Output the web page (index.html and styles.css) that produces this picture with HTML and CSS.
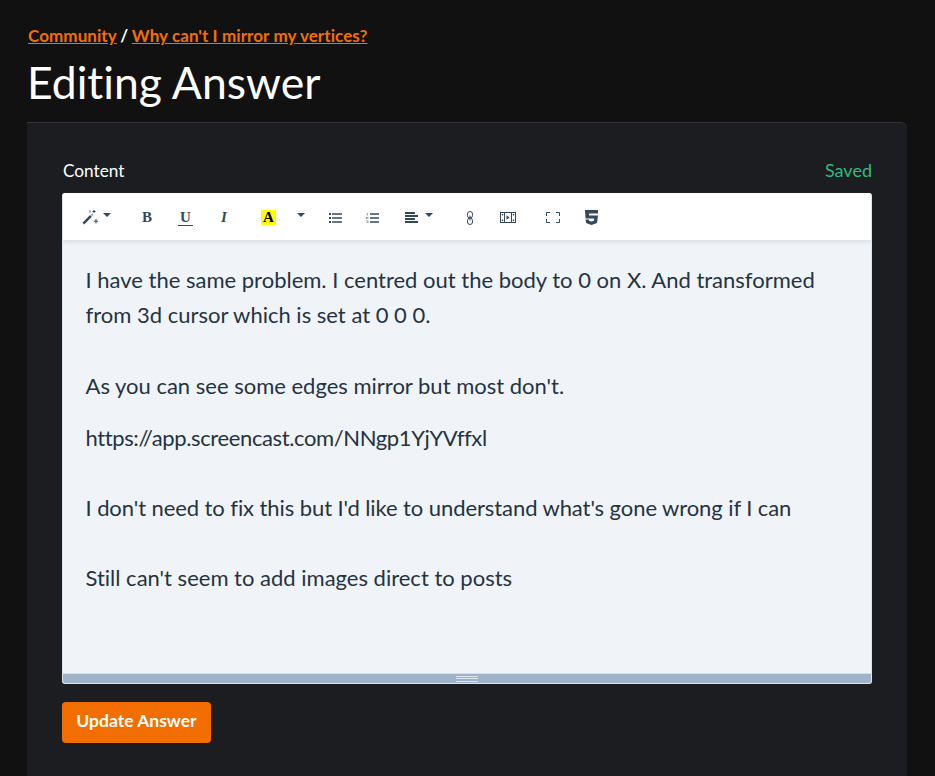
FILE: index.html
```html
<!DOCTYPE html>
<html lang="en">
<head>
<meta charset="utf-8">
<title>Editing Answer</title>
<link rel="stylesheet" href="styles.css">
</head>
<body>
<header class="page-head">
  <nav class="crumbs"><a href="#">Community</a><span class="sep">/</span><a href="#">Why can't I mirror my vertices?</a></nav>
  <h1>Editing Answer</h1>
</header>
<main class="panel">
  <div class="label-row"><span class="label">Content</span><span class="saved">Saved</span></div>
  <div class="editor">
    <div class="toolbar">
      <span class="tool tool-wand">
        <svg width="16" height="15" viewBox="0 0 16 15"><path d="M.5 12.800 8 5l1.800 1.700-7.600 7.800z" fill="#34495e"/><path d="M8.900 4.800 10.300 3.400l1.300 1.300-1.400 1.400z" fill="#8a99a8"/><path d="M12 0v3M10.500 1.500h3M14 9v4.500M11.800 11.200h4.400M8 .5v2" stroke="#34495e" stroke-width="1" fill="none"/></svg>
        <i class="caret caret-wand"></i>
      </span>
      <span class="tool tool-b">B</span>
      <span class="tool tool-u">U</span>
      <span class="tool tool-i">I</span>
      <span class="tool tool-a">A</span>
      <i class="caret caret-a"></i>
      <span class="tool tool-ul">
        <svg width="13" height="10" viewBox="0 0 13 10"><path d="M0 0h2v2H0zM0 4h2v2H0zM0 8h2v2H0zM3 .2h10v1.600H3zM3 4.200h10v1.600H3zM3 8.200h10v1.600H3z" fill="#34495e"/></svg>
      </span>
      <span class="tool tool-ol">
        <svg width="13" height="10" viewBox="0 0 13 10"><path d="M4 .2h9v1.600H4zM4 4.200h9v1.600H4zM4 8.200h9v1.600H4z" fill="#34495e"/><path d="M.8 0h1v2.500h-1zM0 4h2.500v1H1v.5h1.500v.5H0zM0 7.500h2.500v2.500H0v-.5h1.500V9H.5v-.5h1V8H0z" fill="#8a99a8"/></svg>
      </span>
      <span class="tool tool-align">
        <svg width="13" height="11" viewBox="0 0 13 11"><path d="M0 0h10v2H0zM0 3h13v2H0zM0 6h10v2H0zM0 9h13v2H0z" fill="#34495e"/></svg>
        <i class="caret caret-align"></i>
      </span>
      <span class="tool tool-link">
        <svg width="6" height="14" viewBox="0 0 6 14"><rect x=".5" y=".5" width="5" height="6.500" rx="2.500" fill="none" stroke="#34495e"/><rect x=".5" y="7" width="5" height="6.500" rx="2.500" fill="none" stroke="#34495e"/><path d="M3 4.500v5" stroke="#34495e"/></svg>
      </span>
      <span class="tool tool-video">
        <svg width="16" height="11" viewBox="0 0 16 11"><path d="M0 0h16v11H0zM1 1v9h3V1zM12 1v9h3V1zM5 1v9h6V1z" fill="#34495e" fill-rule="evenodd"/><path d="M1.800 2h1.400v1.500H1.800zM1.800 7.500h1.400V9H1.800zM12.800 2h1.400v1.500h-1.400zM12.800 7.500h1.400V9h-1.400zM6.500 3.200 9.500 5.500 6.500 7.800z" fill="#34495e"/></svg>
      </span>
      <span class="tool tool-full">
        <svg width="14" height="11" viewBox="0 0 14 11"><path d="M4 .5H.5V4M10 .5h3.500V4M4 10.500H.5V7M10 10.500h3.500V7" fill="none" stroke="#34495e" stroke-width="1"/></svg>
      </span>
      <span class="tool tool-html">
        <svg width="13" height="15" viewBox="0 0 13 15"><path d="M0 0h13v3.500H4v2h9L12 13l-5.500 2L1 13l-.3-3.500h3.300l.1 1.300 2.400.8 2.500-.8.2-2.300H.5z" fill="#34495e"/></svg>
      </span>
    </div>
    <div class="content">
      <p>I have the same problem. I centred out the body to 0 on X. And transformed from 3d cursor which is set at 0 0 0.<br><br>As you can see some edges mirror but most don't.</p>
      <p><span class="url">https://app.screencast.com/NNgp1YjYVffxl</span><br><br><span class="tight">I don't need to fix this but I'd like to understand what's gone wrong if I can</span><br><br>Still can't seem to add images direct to posts</p>
    </div>
    <div class="resize"><span class="grip"></span></div>
  </div>
  <button class="submit" type="button">Update Answer</button>
</main>
</body>
</html>
```
FILE: styles.css
```css
* { box-sizing: border-box; }
html, body { margin: 0; height: 100%; }
body {
  background: #111;
  color: #fff;
  font-family: Lato, "Open Sans", sans-serif;
  font-variant-ligatures: none;
  height: 776px;
  overflow: hidden;
}
.page-head { padding: 24px 0 0 28px; height: 122px; }
.crumbs { font-size: 17px; line-height: 24px; font-weight: 700; letter-spacing: .08px; }
.crumbs a { color: #f46f00; text-decoration: underline; }
.sep { margin: 0 3.500px; }
.page-head h1 { margin: 8px 0 0 -1px; font-size: 44.500px; line-height: 52px; font-weight: 400; }
.panel {
  margin: 0 28px 0 27px;
  height: 654px;
  background: #1b1d21;
  border-top: 1px solid #333539;
  border-top-right-radius: 6px;
  padding: 35px 35px 0;
}
.label-row { display: flex; justify-content: space-between; align-items: center; height: 24px; margin-bottom: 11px; font-size: 17.200px; }
.label { margin-left: 1px; }
.saved { color: #33ba80; font-size: 18px; }
.editor { width: 810px; height: 491px; border-radius: 3px; border: 1px solid #dde3ea; border-width: 0 1px 1px 1px; background: #f0f3f8; display: flex; flex-direction: column; overflow: hidden; }
.toolbar { height: 47px; flex: none; background: #fff; box-shadow: 0 2px 4px rgba(52,73,94,.12); position: relative; display: flex; align-items: center; padding-top: 2px; color: #34495e; }
.tool { display: inline-flex; align-items: center; position: absolute; }
.caret { display: inline-block; width: 0; height: 0; border: 4px solid transparent; border-top-color: #34495e; border-bottom: 0; margin-bottom: 4px; }
.caret-wand { margin-left: 5px; margin-bottom: 6px; }
.caret-align { margin-left: 7px; margin-bottom: 6px; }
.tool-wand { left: 19px; }
.tool-b, .tool-u, .tool-i, .tool-a { font-family: "Liberation Serif", serif; font-weight: 700; font-size: 15px; line-height: 15px; }
.tool-b { left: 79px; }
.tool-u { left: 115px; padding: 0 2px; border-bottom: 1px solid #34495e; }
.tool-i { left: 158px; font-style: italic; }
.tool-a { left: 198px; width: 15px; height: 15px; background: #ff0; color: #000; justify-content: center; }
.caret-a { position: absolute; left: 234px; margin-bottom: 6px; }
.tool-ul { left: 266px; }
.tool-ol { left: 303px; }
.tool-align { left: 342px; }
.tool-link { left: 404px; }
.tool-video { left: 437px; }
.tool-full { left: 483px; }
.tool-html { left: 522px; }
.content { flex: 1; padding: 22px 22.500px 0; color: #243342; font-size: 22px; line-height: 35.200px; }
.content p { margin: 0 0 16.800px; }
.url { letter-spacing: -.38px; }
.tight { letter-spacing: -.08px; }
.resize { height: 10px; flex: none; background: #9fb3c8; border-top: 1px solid #d5dde6; display: flex; align-items: center; justify-content: center; }
.grip { width: 22px; height: 6px; border-top: 1px solid #dce6f0; border-bottom: 1px solid #dce6f0; position: relative; }
.grip::after { content: ""; position: absolute; left: 0; right: 0; top: 1.500px; height: 1px; background: #dce6f0; }
.submit { margin-top: 18px; display: block; width: 149px; height: 41px; border: 0; border-radius: 4px; padding: 0 0 4px; background: #f26e00; color: #fff; font: 700 17.500px Lato, sans-serif; font-variant-ligatures: none; }
```
